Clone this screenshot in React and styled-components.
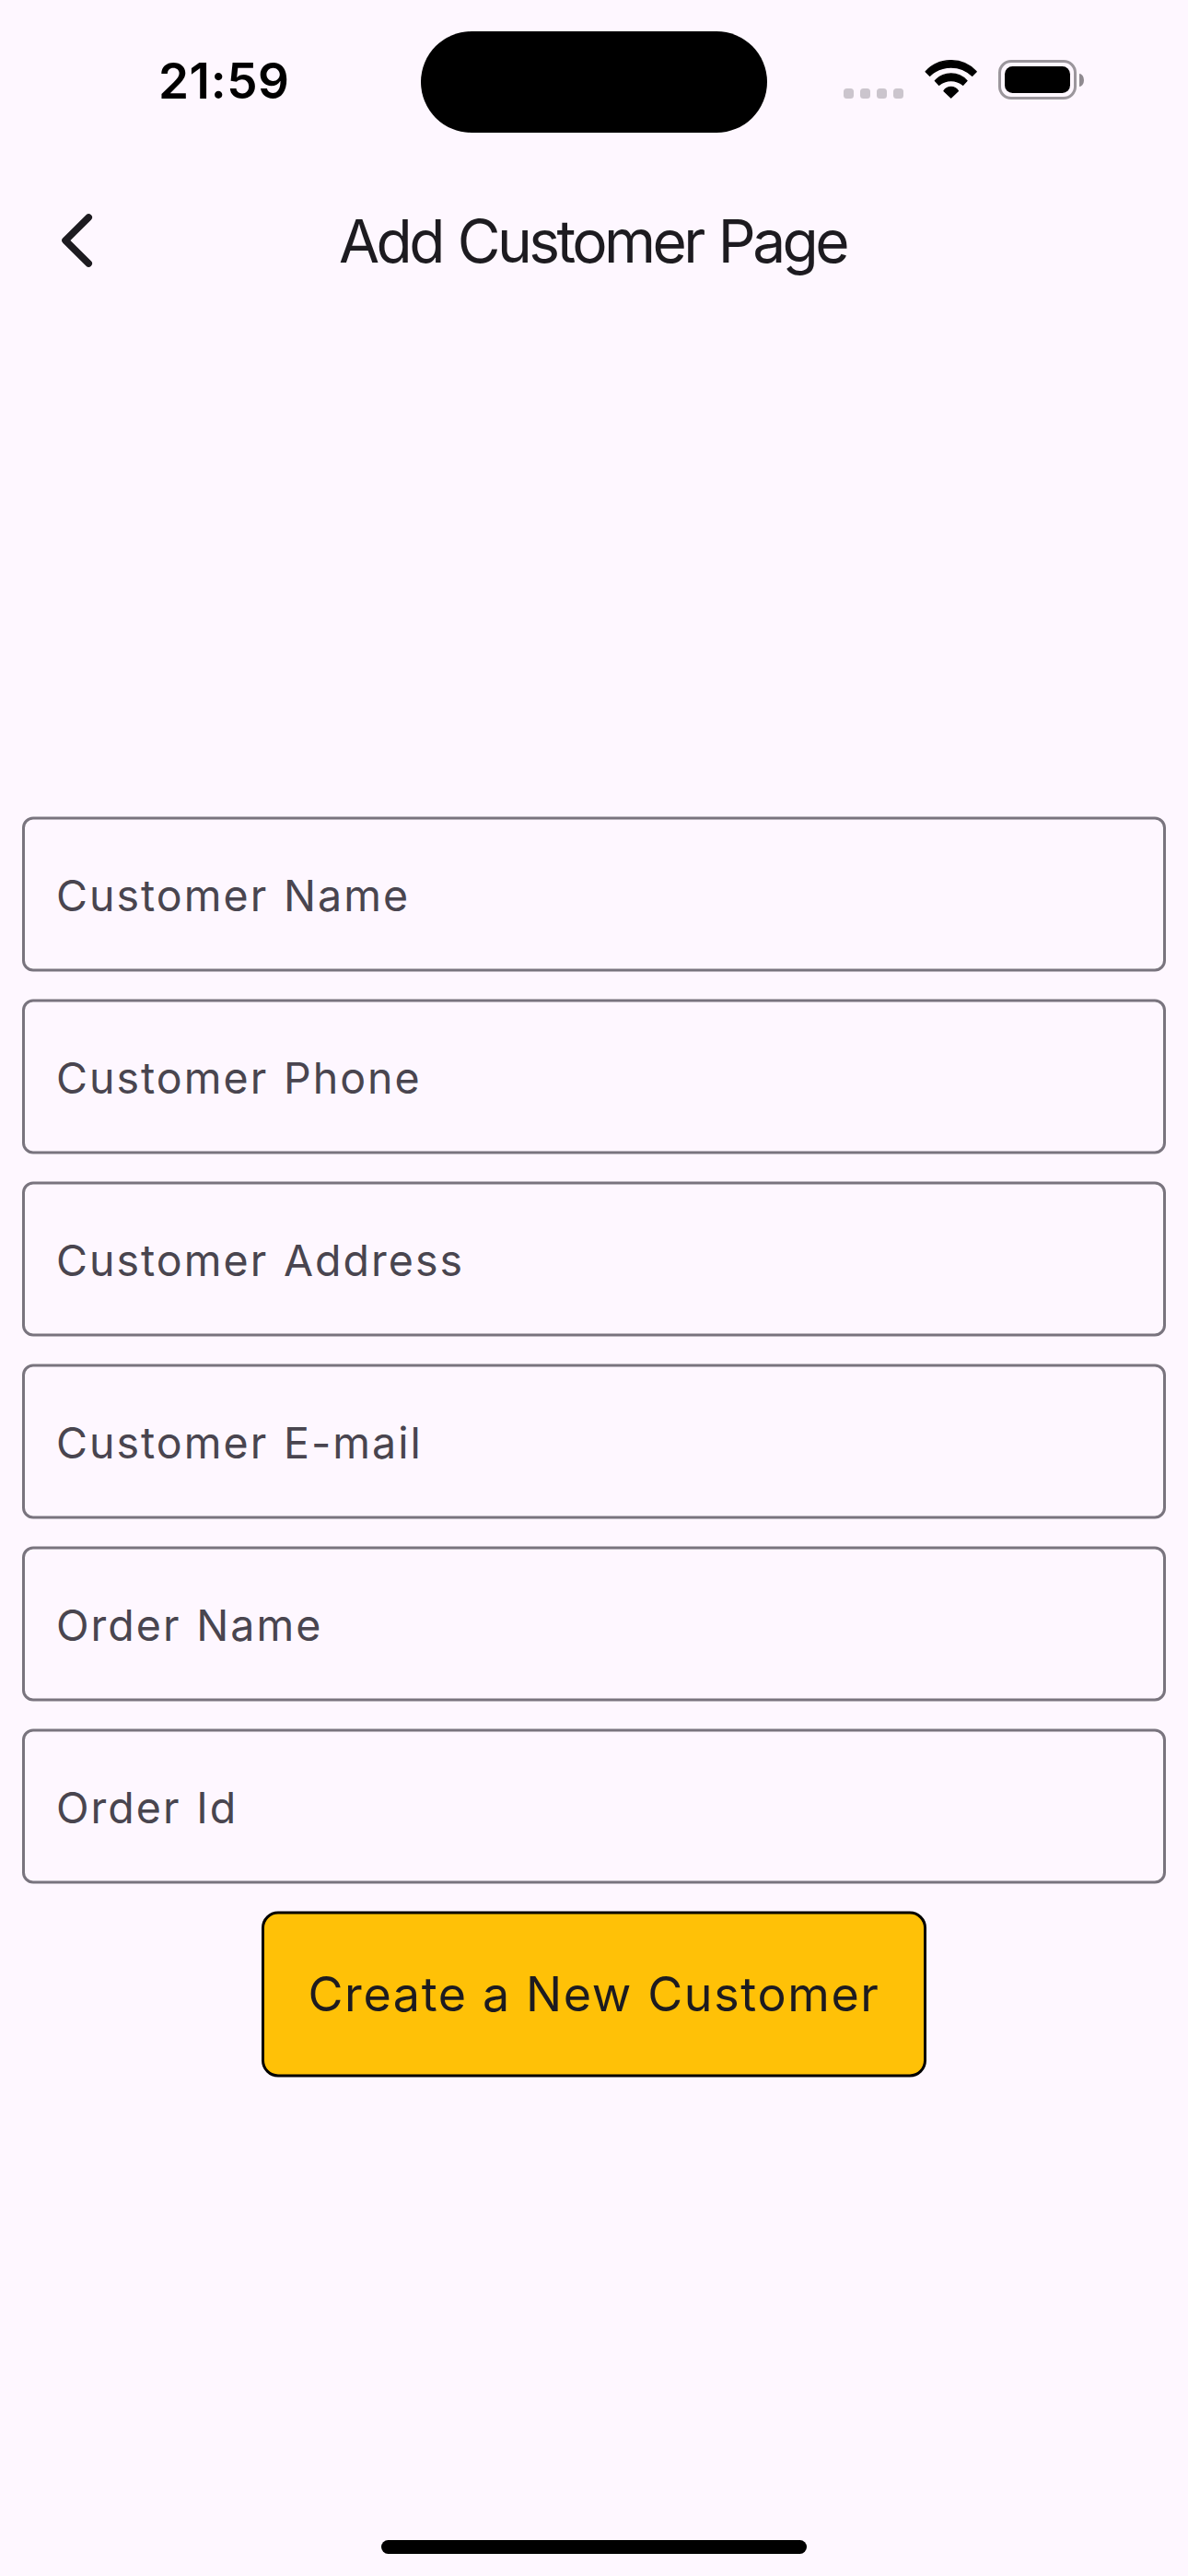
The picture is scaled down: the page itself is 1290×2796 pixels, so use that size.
import React from "react";
import styled, { createGlobalStyle } from "styled-components";

const GlobalStyle = createGlobalStyle`
  *, *::before, *::after { box-sizing: border-box; }
  html, body { margin: 0; padding: 0; background: #fef7ff; }
  body { font-family: Inter, "Liberation Sans", sans-serif; color: #1d1b20; }
`;

const Screen = styled.div`
  display: flex;
  flex-direction: column;
  width: 1290px;
  height: 2796px;
  background: #fef7ff;
  overflow: hidden;
`;

const StatusBar = styled.header`
  display: grid;
  grid-template-columns: 457px 376px 1fr;
  height: 177px;
  padding-top: 34px;
  align-items: start;
`;

const Clock = styled.time`
  height: 110px;
  padding-left: 172px;
  line-height: 109px;
  font-size: 53px;
  font-weight: 600;
  letter-spacing: 0.6px;
  color: #000;
  white-space: nowrap;
`;

const Island = styled.div`
  height: 110px;
  border-radius: 55px;
  background: #000;
`;

const Indicators = styled.div`
  display: flex;
  align-items: flex-start;
  padding: 31px 0 0 83px;
`;

const SignalDots = styled.div`
  display: flex;
  gap: 7px;
  margin: 31px 23px 0 0;
`;

const SignalDot = styled.i`
  width: 11px;
  height: 11px;
  border-radius: 3.5px;
  background: #cbc5cd;
`;

const WifiIcon = styled.svg`
  display: block;
  width: 57.33px;
  height: 42px;
  margin-right: 22.67px;
`;

const Battery = styled.div`
  display: flex;
  align-items: center;
  gap: 3px;
`;

const BatteryShell = styled.div`
  width: 85px;
  height: 43px;
  padding: 4px;
  border: 3px solid #9b969c;
  border-radius: 14px;
`;

const BatteryLevel = styled.div`
  height: 100%;
  border-radius: 8.5px;
  background: #000;
`;

const BatteryCap = styled.div`
  width: 5px;
  height: 14px;
  border-radius: 0 5px 5px 0 / 0 7px 7px 0;
  background: #8f8a90;
`;

const AppBar = styled.nav`
  display: grid;
  grid-template-columns: 168px 1fr 168px;
  align-items: center;
  height: 168px;
`;

const BackButton = styled.button`
  display: flex;
  align-items: center;
  height: 168px;
  padding: 0 0 0 64px;
  border: 0;
  background: none;
  color: inherit;
`;

const Title = styled.h1`
  margin: 0;
  padding: 2px 3px 0 0;
  font-size: 64px;
  line-height: 84px;
  font-weight: 380;
  letter-spacing: -3.55px;
  word-spacing: 2.5px;
  text-align: center;
  white-space: nowrap;
`;

const Body = styled.main`
  flex: 1;
  display: flex;
  flex-direction: column;
  align-items: center;
  padding: 541px 24px 0;
`;

const Form = styled.form`
  display: flex;
  flex-direction: column;
  align-items: center;
  gap: 30px;
  width: 100%;
  transform: translateY(0.5px);
`;

const Field = styled.label`
  display: flex;
  align-items: center;
  width: 100%;
  height: 168px;
  padding: 2px 34px 0;
  border: 3px solid #79747e;
  border-radius: 12px;
  font-size: 46.5px;
  font-weight: 380;
  letter-spacing: 2.02px;
  word-spacing: 1.7px;
  color: #49454f;
  white-space: nowrap;
`;

const SubmitButton = styled.button`
  width: 722px;
  height: 180px;
  padding: 0 0 2px;
  border: 3px solid #000;
  border-radius: 18px;
  background: #ffc107;
  color: #1d1b20;
  font: inherit;
  font-size: 52px;
  font-weight: 380;
  letter-spacing: 1.62px;
  white-space: nowrap;
`;

const HomeBar = styled.footer`
  display: flex;
  justify-content: center;
  padding-bottom: 24px;
`;

const HomeIndicator = styled.div`
  width: 462px;
  height: 15px;
  border-radius: 8px;
  background: #000;
`;

const FIELDS = [
  "Customer Name",
  "Customer Phone",
  "Customer Address",
  "Customer E-mail",
  "Order Name",
  "Order Id",
];

export default function App() {
  return (
    <>
      <GlobalStyle />
      <Screen>
        <StatusBar>
          <Clock>21:59</Clock>
          <Island />
          <Indicators>
            <SignalDots>
              <SignalDot />
              <SignalDot />
              <SignalDot />
              <SignalDot />
            </SignalDots>
            <WifiIcon viewBox="0 0 172 126">
              <g fill="#000" stroke="#000" strokeWidth="4" strokeLinejoin="round">
                <path d="M3.5 38A112.5 112.5 0 0 1 168.5 38L155 52A99 99 0 0 0 17 52Z" />
                <path d="M34 68A70 70 0 0 1 138 68L125 82A61 61 0 0 0 47 82Z" />
                <path d="M63 101A27 27 0 0 1 109 101L86 123Z" />
              </g>
            </WifiIcon>
            <Battery>
              <BatteryShell>
                <BatteryLevel />
              </BatteryShell>
              <BatteryCap />
            </Battery>
          </Indicators>
        </StatusBar>
        <AppBar>
          <BackButton type="button" aria-label="Back">
            <svg width="40" height="64" viewBox="0 0 40 64" fill="none">
              <path
                d="M32.2 7L7 32L32.2 57"
                stroke="currentColor"
                strokeWidth="7.6"
                strokeLinecap="round"
                strokeLinejoin="round"
              />
            </svg>
          </BackButton>
          <Title>Add Customer Page</Title>
        </AppBar>
        <Body>
          <Form>
            {FIELDS.map((label) => (
              <Field key={label}>{label}</Field>
            ))}
            <SubmitButton type="button">Create a New Customer</SubmitButton>
          </Form>
        </Body>
        <HomeBar>
          <HomeIndicator />
        </HomeBar>
      </Screen>
    </>
  );
}
